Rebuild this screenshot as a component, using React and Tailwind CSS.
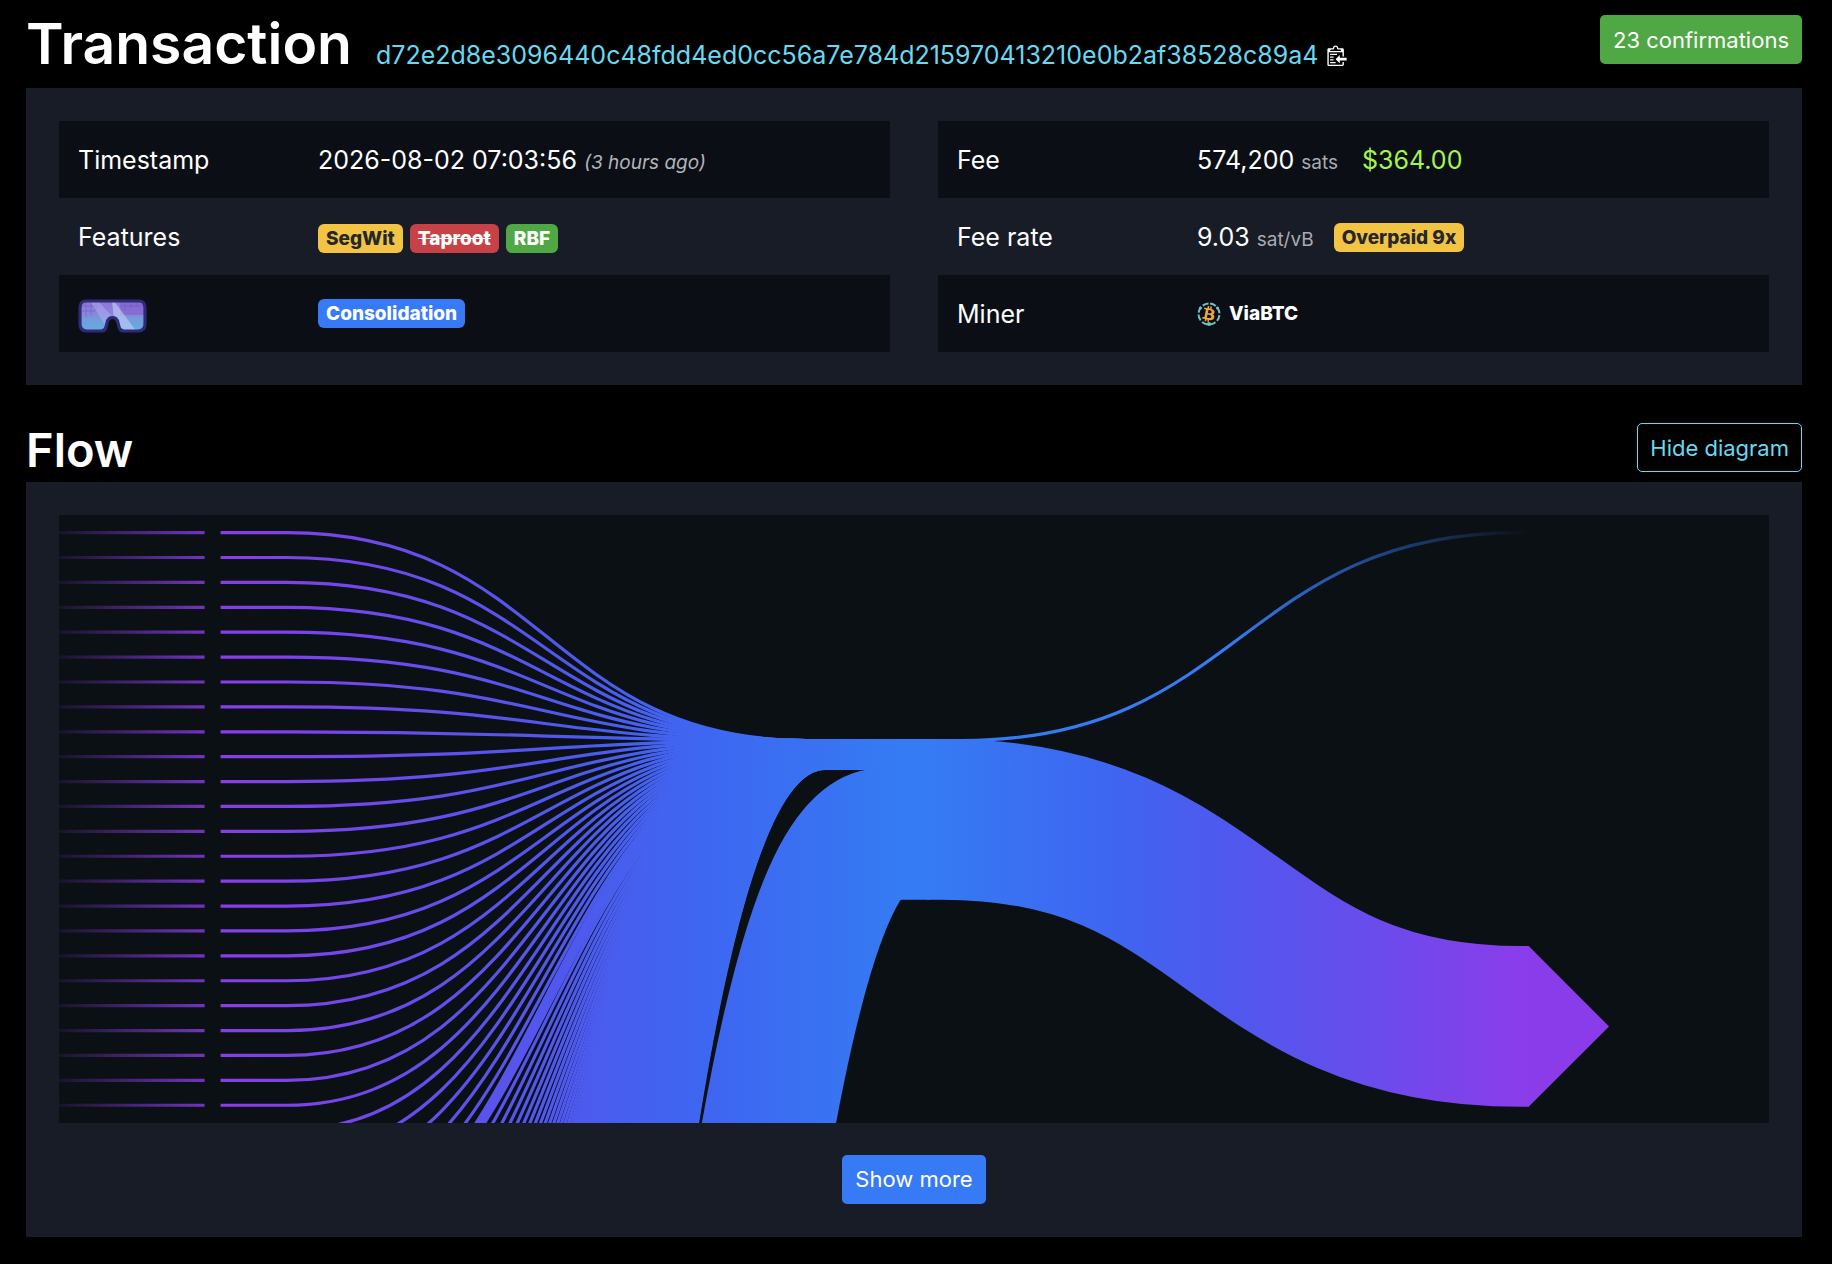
import React from "react";
import { FaBtc } from "react-icons/fa";

const PURPLE = "#8b3cea";
const VIOLET = "#644eec";
const INDIGO = "#4f58ed";
const AZURE = "#3e66f1";
const BLUE = "#357bf3";

/* ---------- transaction flow geometry ---------- */

const W = 1069;
const H = 360;
const MARGIN = 10;
const COMBINED = 100;
const MID = 10;
const CONNECTOR = 100;
const MAX_VISIBLE = 24;
// extra vertical distance kept before a strand that groups the remaining inputs
const GROUP_GAP = 370;

function layoutStrands(weights, grouped = false) {
  const lines = weights.map((weight) => ({
    weight,
    thickness: Math.min(COMBINED + 0.5, Math.max(1, weight) + 1),
  }));
  const visible = Math.min(MAX_VISIBLE, lines.length);
  const visibleWeight = lines.slice(0, visible).reduce((sum, l) => sum + l.thickness, 0);
  const innerTop = H / 2 - COMBINED / 2;
  const innerBottom = innerTop + COMBINED + 0.5;
  const spacing = Math.max(4, (H - visibleWeight) / (visible - 1));
  let lastOuter = 0;
  let lastInner = innerTop;
  let lastWeight = 0;
  let offset = 0;
  let minOffset = 0;
  let maxOffset = 0;
  let pad = 0;
  lines.forEach((l, i) => {
    if (grouped && i === lines.length - 1) lastOuter += GROUP_GAP;
    l.outer = lastOuter + l.thickness / 2;
    l.inner = Math.min(
      innerBottom - l.thickness / 2,
      Math.max(innerTop + l.thickness / 2, lastInner + l.weight / 2)
    );
    lastOuter += l.thickness + spacing;
    lastInner += l.weight;
    const w = (W - Math.max(lastWeight, l.weight)) / 2;
    const t = (lastWeight + l.weight) / 2;
    const a = Math.atan2(1.5 * (l.inner - l.outer), 0.75 * w);
    if (Math.sin(a) !== 0) {
      offset += Math.max(Math.min((t * (1 - Math.cos(a))) / Math.sin(a), t), -t);
    }
    l.offset = offset;
    minOffset = Math.min(minOffset, offset);
    maxOffset = Math.max(maxOffset, offset);
    pad = Math.max(pad, l.thickness / 2 + 3);
    lastWeight = l.weight;
  });
  const reach = pad + maxOffset - minOffset;
  return lines.map((l) => ({ ...l, offset: l.offset - minOffset, reach }));
}

function strandPath(side, l, start = l.thickness * 0.5 + CONNECTOR) {
  const x = (v) => (side === "in" ? v : W - v);
  const curveStart = Math.max(start + 5, l.reach + l.offset);
  const end = W / 2 - MID * 0.9 + 1;
  const curveEnd = end - l.offset - 10;
  const mid = (curveStart + curveEnd) / 2;
  const outer = Math.round(l.outer) === Math.round(l.inner) ? l.outer - 1 : l.outer;
  return `M ${x(start)} ${outer} L ${x(curveStart)} ${outer} C ${x(mid)} ${outer}, ${x(mid)} ${l.inner}, ${x(curveEnd)} ${l.inner} L ${x(end)} ${l.inner}`;
}

const inputWeights = Array.from({ length: 173 }, (_, i) => (i === 29 ? 5.4 : 0.076));
const inputTotal = inputWeights.reduce((a, b) => a + b, 0);
const inputs = layoutStrands([...inputWeights, COMBINED - inputTotal], true);
const outputs = layoutStrands([0.2, 99.8]);

function FlowDiagram() {
  const payout = outputs[1];
  const tipBase = W - CONNECTOR - payout.thickness / 2;
  return (
    <svg viewBox={`0 0 ${W} ${H + 2 * MARGIN}`} className="block w-full bg-[#0b1015]" role="img" aria-label="Transaction flow diagram">
      <defs>
        <linearGradient id="input-gradient">
          <stop offset="0" stopColor={PURPLE} />
          <stop offset="0.3" stopColor={VIOLET} />
          <stop offset="0.5" stopColor={INDIGO} />
          <stop offset="0.7" stopColor={AZURE} />
          <stop offset="1" stopColor={BLUE} />
        </linearGradient>
        <linearGradient id="output-gradient">
          <stop offset="0" stopColor={BLUE} />
          <stop offset="0.3" stopColor={AZURE} />
          <stop offset="0.5" stopColor={INDIGO} />
          <stop offset="0.7" stopColor={VIOLET} />
          <stop offset="1" stopColor={PURPLE} />
        </linearGradient>
        <linearGradient id="fee-gradient">
          <stop offset="0" stopColor={BLUE} />
          <stop offset="0.5" stopColor={BLUE} />
          <stop offset="1" stopColor={BLUE} stopOpacity="0" />
        </linearGradient>
        <linearGradient id="connector-gradient" gradientUnits="userSpaceOnUse" x1="0" x2="90" y1="0" y2="0">
          <stop offset="0" stopColor={PURPLE} stopOpacity="0.1" />
          <stop offset="1" stopColor={PURPLE} stopOpacity="0.8" />
        </linearGradient>
      </defs>
      <g transform={`translate(0 ${MARGIN})`} fill="none">
        <path d={`M ${W / 2 - MID} ${H / 2 + 0.25} H ${W / 2 + MID}`} stroke={BLUE} strokeWidth={COMBINED + 0.5} />
        {inputs.slice(0, MAX_VISIBLE).map((l, i) => (
          <path
            key={i}
            d={`M 0 ${Math.round(l.outer) === Math.round(l.inner) ? l.outer - 1 : l.outer} H 91`}
            stroke="url(#connector-gradient)"
            strokeWidth={l.thickness}
          />
        ))}
        {inputs.map((l, i) => (
          <path key={i} d={strandPath("in", l)} stroke="url(#input-gradient)" strokeWidth={l.thickness} />
        ))}
        <path
          d={strandPath("out", outputs[0], CONNECTOR + payout.thickness / 2)}
          stroke="url(#fee-gradient)"
          strokeWidth={outputs[0].thickness}
        />
        <path d={strandPath("out", payout)} stroke="url(#output-gradient)" strokeWidth={payout.thickness} />
        <path
          d={`M ${tipBase - 0.5} ${payout.outer - payout.thickness / 2} h 0.5 l ${payout.thickness / 2} ${payout.thickness / 2} l ${-payout.thickness / 2} ${payout.thickness / 2} h -0.5 z`}
          fill={PURPLE}
        />
      </g>
    </svg>
  );
}

/* ---------- icons ---------- */

function ClipboardIcon() {
  return (
    <svg viewBox="0 0 14 16" className="h-[22px] w-5" fill="currentColor" aria-hidden="true">
      <path d="M2 13h4v1H2v-1zm5-6H2v1h5V7zm2 3V8l-3 3 3 3v-2h5v-2H9zM4.500 9H2v1h2.500V9zM2 12h2.500v-1H2v1zm9 1h1v2c-.02.28-.11.52-.3.7-.19.18-.42.28-.7.3H1c-.55 0-1-.45-1-1V4c0-.55.45-1 1-1h3c0-1.110.89-2 2-2 1.110 0 2 .89 2 2h3c.55 0 1 .45 1 1v5h-1V6H1v9h10v-2zM2 5h8c0-.55-.45-1-1-1H8c-.55 0-1-.45-1-1s-.45-1-1-1-1 .45-1 1-.45 1-1 1H3c-.55 0-1 .45-1 1z" />
    </svg>
  );
}

function GogglesIcon() {
  const shape =
    "M8 2H61Q67 2 67 9V25Q67 32 60 32H46Q42 32 41 28L39.500 22Q38 18.500 34.500 18.500Q31 18.500 29.500 22L28 28Q27 32 23 32H9Q2 32 2 25V9Q2 2 8 2Z";
  return (
    <svg viewBox="0 0 69 34" className="mt-1 h-[34px] w-[69px]" role="img" aria-label="Goggles">
      <defs>
        <linearGradient id="lens" x1="0" y1="0" x2="0" y2="1">
          <stop offset="0" stopColor="#8f72d6" />
          <stop offset="0.45" stopColor="#8b86dc" />
          <stop offset="0.6" stopColor="#6f9fdc" />
          <stop offset="1" stopColor="#67acdf" />
        </linearGradient>
        <clipPath id="lens-clip">
          <path d={shape} />
        </clipPath>
      </defs>
      <g clipPath="url(#lens-clip)">
        <rect width="69" height="34" fill="url(#lens)" />
        <path d="M42 2H69V16H42Z" fill="#8060cf" opacity="0.6" />
        <path d="M4 7H20M4 12H17M8 2V18M13 2V16M18 2V12M42 7H66M47 2V12M53 2V9M59 2V8" stroke="#6458bd" strokeWidth="1" opacity="0.5" />
        <path d="M12 2H20L38 22L34 34H32Z" fill="#b0b6f2" opacity="0.45" />
        <path d="M34 2H36L59 33H40L36 20Z" fill="#b9c6f4" opacity="0.7" />
      </g>
      <path d={shape} fill="none" stroke="#2f2a75" strokeWidth="3.200" />
    </svg>
  );
}

function ViaBtcIcon() {
  return (
    <svg viewBox="0 0 24 24" className="size-6" aria-hidden="true">
      <circle cx="12" cy="12" r="10.500" fill="none" stroke="#73bfc6" strokeWidth="2" strokeDasharray="6.200 2.050" transform="rotate(-84 12 12)" />
      <circle cx="12" cy="22" r="2" fill="#73bfc6" />
      <circle cx="3.500" cy="6" r="1.600" fill="#73bfc6" />
      <circle cx="20.500" cy="6" r="1.600" fill="#73bfc6" />
      <g transform="rotate(12 12 12)">
        <FaBtc x="4" y="4" size="16" color="#eda63c" />
      </g>
    </svg>
  );
}

/* ---------- page parts ---------- */

function Badge({ className, children }) {
  return (
    <span className={`inline-flex h-[29px] items-center rounded-md px-2 text-[19px] leading-none font-extrabold ${className}`}>{children}</span>
  );
}

function DetailTable({ rows }) {
  return (
    <table className="w-full table-fixed self-start text-left">
      <tbody>
        {rows.map(([label, value], i) => (
          <tr key={i} className="h-[77px] odd:bg-[#0b0f15]">
            <th scope="row" className="w-60 pl-[19px] font-normal">{label}</th>
            <td className="pl-[19px]">
              <div className="flex items-center">{value}</div>
            </td>
          </tr>
        ))}
      </tbody>
    </table>
  );
}

const leftRows = [
  [
    "Timestamp",
    <span>
      2026-08-02 07:03:56 <i className="text-[19px] leading-none text-[#b3b5b9]">(3 hours ago)</i>
    </span>,
  ],
  [
    "Features",
    <div className="flex gap-[7px] pt-1">
      <Badge className="bg-[#f3c344] text-[#24272b]">SegWit</Badge>
      <Badge className="bg-[#c74247] text-white line-through">Taproot</Badge>
      <Badge className="bg-[#4fa843] text-white">RBF</Badge>
    </div>,
  ],
  [<GogglesIcon />, <Badge className="bg-[#377af5] text-white">Consolidation</Badge>],
];

const rightRows = [
  [
    "Fee",
    <span>
      574,200 <span className="text-[19px] leading-none text-[#a9abb0]">sats</span>
      <span className="ml-6 text-[#a4f54c]">$364.00</span>
    </span>,
  ],
  [
    "Fee rate",
    <>
      <span>
        9.03 <span className="text-[19px] leading-none text-[#a9abb0]">sat/vB</span>
      </span>
      <Badge className="mt-0.5 ml-5 bg-[#f3c344] text-[#24272b]">Overpaid 9x</Badge>
    </>,
  ],
  [
    "Miner",
    <a href="#viabtc" className="flex items-center gap-2 text-[19px] font-extrabold">
      <ViaBtcIcon />
      ViaBTC
    </a>,
  ],
];

export default function App() {
  return (
    <main className="min-h-screen bg-black px-[26px] pr-[30px] pb-[27px] font-['Inter',sans-serif] text-[25px] leading-9 text-white">
      <header className="flex h-[88px] items-start justify-between">
        <div className="flex items-baseline">
          <h1 className="text-[57px] leading-[87px] font-semibold">Transaction</h1>
          <a href="#tx" className="ml-6 text-[#67d9f3]">
            d72e2d8e3096440c48fdd4ed0cc56a7e784d215970413210e0b2af38528c89a4
          </a>
          <button type="button" aria-label="Copy transaction id" className="ml-2 self-end pb-[21px]">
            <ClipboardIcon />
          </button>
        </div>
        <button type="button" className="mt-[15px] h-[49px] rounded-[5px] bg-[#4fa843] px-[13px] text-[22px]">
          23 confirmations
        </button>
      </header>

      <section className="grid grid-cols-2 gap-12 bg-[#181c27] p-[33px]">
        <DetailTable rows={leftRows} />
        <DetailTable rows={rightRows} />
      </section>

      <div className="mt-[38px] mb-2.5 flex items-end justify-between">
        <h2 className="text-[47px] leading-[45px] font-semibold">Flow</h2>
        <button type="button" className="h-[49px] rounded-[5px] border border-[#67d9f3] px-3 text-[22px] text-[#67d9f3]">
          Hide diagram
        </button>
      </div>

      <section className="bg-[#181c27] p-[33px]">
        <FlowDiagram />
        <div className="mt-8 flex justify-center">
          <button type="button" className="h-[49px] rounded-[5px] bg-[#377af5] px-[13px] text-[22px]">
            Show more
          </button>
        </div>
      </section>
    </main>
  );
}
